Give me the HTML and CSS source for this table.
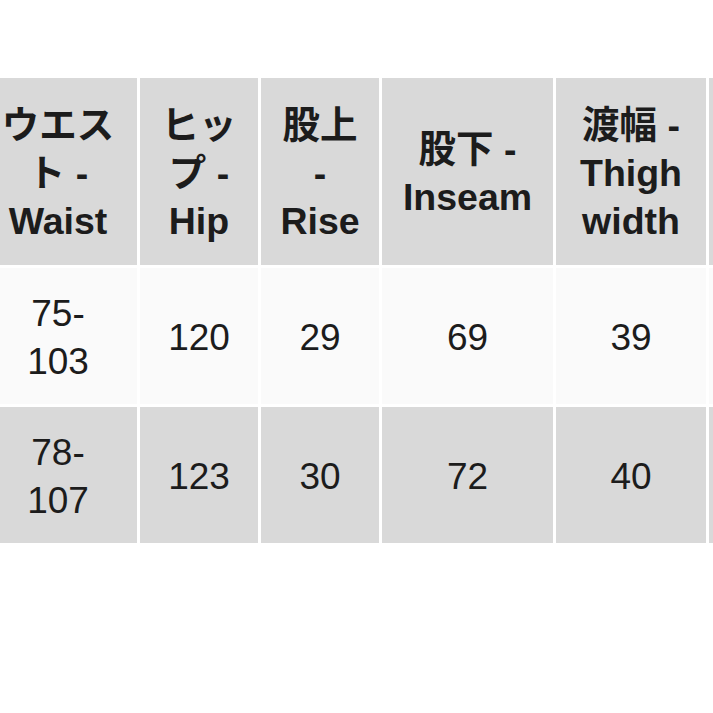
FILE: index.html
```html
<!DOCTYPE html>
<html lang="ja">
<head>
<meta charset="utf-8">
<link rel="stylesheet" href="styles.css">
</head>
<body>
<div class="frame">
<table class="size-table">
  <colgroup>
    <col class="c1"><col class="c2"><col class="c3"><col class="c4"><col class="c5"><col class="c6">
  </colgroup>
  <thead>
    <tr>
      <th class="first">ウエスト - Waist</th>
      <th>ヒップ - Hip</th>
      <th>股上 - Rise</th>
      <th>股下 - Inseam</th>
      <th>渡幅 - Thigh width</th>
      <th class="edge"></th>
    </tr>
  </thead>
  <tbody>
    <tr class="light">
      <td class="first">75-103</td><td>120</td><td>29</td><td>69</td><td>39</td><td class="edge"></td>
    </tr>
    <tr class="dark">
      <td class="first">78-107</td><td>123</td><td>30</td><td>72</td><td>40</td><td class="edge"></td>
    </tr>
  </tbody>
</table>
</div>
</body>
</html>
```

FILE: styles.css
```css
html, body {
  margin: 0;
  padding: 0;
  background: #ffffff;
}
body {
  width: 713px;
  height: 713px;
  overflow: hidden;
}
.frame {
  width: 713px;
  overflow: hidden;
  padding-top: 75px;
}
.size-table {
  margin-left: -24px;
  border-collapse: separate;
  border-spacing: 3px;
  table-layout: fixed;
  width: 770px;
  font-family: "Liberation Sans", "Noto Sans CJK JP", sans-serif;
  font-size: 37px;
  line-height: 48px;
  color: #1c1c1c;
  background: #ffffff;
}
.c1 { width: 158px; }
.c2 { width: 118px; }
.c3 { width: 118px; }
.c4 { width: 171px; }
.c5 { width: 150px; }
.c6 { width: 40px; }
.size-table th,
.size-table td {
  text-align: center;
  vertical-align: middle;
  padding: 22px 18px 18px;
}
.size-table td.first {
  padding-left: 24px;
  padding-right: 24px;
}
.size-table th {
  background: #d9d9d9;
  font-weight: bold;
  font-size: 37.5px;
  padding: 23px 19px 20px;
}
.size-table th.first {
  padding-left: 22px;
  padding-right: 22px;
}
.size-table .edge {
  padding: 0;
}
.size-table td {
  font-weight: normal;
}
.light td {
  background: #fafafa;
}
.dark td {
  background: #d9d9d9;
}
```
